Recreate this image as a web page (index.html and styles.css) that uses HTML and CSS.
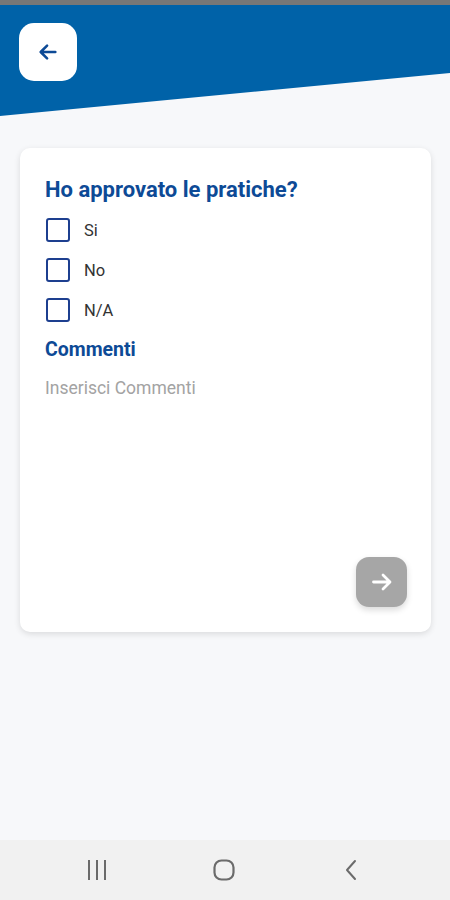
FILE: index.html
```html
<!DOCTYPE html>
<html lang="it">
<head>
<meta charset="utf-8">
<title>Approvazione pratiche</title>
<link rel="stylesheet" href="styles.css">
</head>
<body>
<div class="status"></div>
<header class="header">
  <button class="back" aria-label="Indietro">
    <svg width="22" height="22" viewBox="0 0 24 24" fill="none" stroke="#0d4a96" stroke-width="2.8" stroke-linecap="round" stroke-linejoin="round"><path d="M20 12H4.5M11 5l-7 7 7 7"/></svg>
  </button>
</header>
<main class="main">
  <section class="card">
    <h1 class="title">Ho approvato le pratiche?</h1>
    <div class="options">
      <label class="option"><span class="box"></span><span class="label">Si</span></label>
      <label class="option"><span class="box"></span><span class="label">No</span></label>
      <label class="option"><span class="box"></span><span class="label">N/A</span></label>
    </div>
    <h2 class="subtitle">Commenti</h2>
    <div class="comment">Inserisci Commenti</div>
    <div class="actions">
      <button class="next" aria-label="Avanti">
        <svg width="24" height="24" viewBox="0 0 24 24" fill="none" stroke="#ffffff" stroke-width="2.8" stroke-linecap="round" stroke-linejoin="round"><path d="M3.5 12H19.5M13 5l7 7-7 7"/></svg>
      </button>
    </div>
  </section>
</main>
<nav class="navbar">
  <span class="slot"><svg width="22" height="22" viewBox="0 0 22 22" fill="none" stroke="#6b6b6b" stroke-width="2"><path d="M3 1v20M11 1v20M19 1v20"/></svg></span>
  <span class="slot"><svg width="24" height="24" viewBox="0 0 24 24" fill="none" stroke="#6b6b6b" stroke-width="2.2"><rect x="2.5" y="2.5" width="19" height="19" rx="7"/></svg></span>
  <span class="slot"><svg width="16" height="22" viewBox="0 0 16 22" fill="none" stroke="#6b6b6b" stroke-width="2" stroke-linecap="round" stroke-linejoin="round"><path d="M12 2L4 11l8 9"/></svg></span>
</nav>
</body>
</html>
```
FILE: styles.css
```css
* { box-sizing: border-box; }
html, body { margin: 0; padding: 0; }
body {
  width: 450px;
  height: 900px;
  display: flex;
  flex-direction: column;
  background: #f7f8fa;
  font-family: Roboto, "Liberation Sans", sans-serif;
  overflow: hidden;
}
.status { height: 5px; background: #777777; flex: none; }
.header {
  flex: none;
  height: 111px;
  background: #0062a8;
  clip-path: polygon(0 0, 100% 0, 100% 68px, 0 100%);
  padding: 18px 0 0 19px;
}
.back {
  width: 58px;
  height: 58px;
  border: none;
  border-radius: 15px;
  background: #ffffff;
  display: flex;
  align-items: center;
  justify-content: center;
  padding: 0;
}
.main { flex: 1; padding: 32px 19px 0 20px; }
.card {
  height: 484px;
  background: #ffffff;
  border-radius: 10px;
  box-shadow: 0 2px 6px rgba(0,0,0,0.12);
  padding: 28px 24px 25px 25px;
  display: flex;
  flex-direction: column;
}
.title {
  margin: 0;
  font-size: 22px;
  line-height: 28px;
  font-weight: 700;
  color: #0d4a96;
}
.options { display: flex; flex-direction: column; gap: 16px; margin-top: 14px; }
.option { display: flex; align-items: center; height: 24px; }
.box {
  width: 24px;
  height: 24px;
  border: 2px solid #1d3f8f;
  border-radius: 3px;
  margin-left: 1px;
}
.label { margin-left: 14px; font-size: 16.5px; color: #333333; }
.subtitle {
  margin: 16px 0 0;
  font-size: 19.5px;
  line-height: 24px;
  font-weight: 700;
  color: #0d4a96;
}
.comment {
  margin-top: 16px;
  font-size: 17.5px;
  line-height: 20px;
  color: #a3a3a3;
  flex: 1;
}
.actions { display: flex; justify-content: flex-end; }
.next {
  width: 51px;
  height: 50px;
  border: none;
  border-radius: 13px;
  background: #a6a6a6;
  box-shadow: 0 3px 6px rgba(0,0,0,0.15);
  display: flex;
  align-items: center;
  justify-content: center;
  padding: 0;
}
.navbar {
  flex: none;
  height: 60px;
  background: #f1f1f1;
  display: flex;
  align-items: center;
  padding-left: 77px;
  gap: 87px;
}
.slot { width: 40px; display: flex; justify-content: center; }
```
